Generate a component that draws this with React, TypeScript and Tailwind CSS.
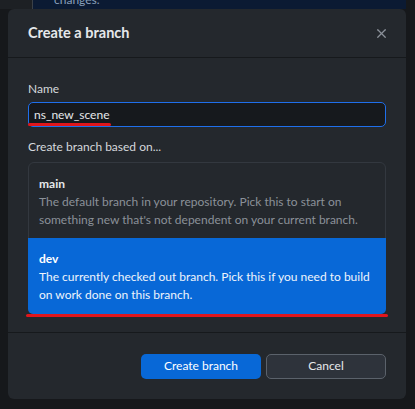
import { X } from 'lucide-react'

const font = { fontFamily: 'Lato, "Noto Sans", sans-serif' }

function BranchOption({
	name,
	description,
	selected,
}: {
	name: string
	description: string
	selected?: boolean
}) {
	return (
		<div
			className={
				selected
					? 'relative bg-[#0868d7] px-[11px] pt-[12px] pb-[10px] -mx-px -mb-px rounded-b-[5px]'
					: 'px-[10px] pt-[12px] pb-[9px]'
			}
		>
			<div className={selected ? 'text-[12px] font-bold leading-[18px] text-white' : 'text-[12px] font-bold leading-[18px] text-[#e6e8eb]'}>
				{name}
			</div>
			<div className={selected ? 'text-[12px] leading-[18px] text-[#eef4fc]' : 'text-[12px] leading-[18px] text-[#8b9199]'}>
				{description}
			</div>
			{selected && (
				<div className="absolute left-[-2px] right-[-2px] bottom-[-3px] h-[3px] rounded-full bg-[#e0161c]" />
			)}
		</div>
	)
}

export default function App() {
	return (
		<div className="w-[415px] h-[409px] bg-[#16181b] overflow-hidden" style={font}>
			<div className="flex h-[9px] overflow-hidden">
				<div className="w-[32px] bg-[#1d2024]" />
				<div className="w-px bg-[#3a4048]" />
				<div className="flex-1 bg-[#0b1a33] overflow-hidden">
					<div className="ml-[21px] -mt-[8px] text-[12px] leading-[16px] text-[#8aa0bb]">changes.</div>
				</div>
				<div className="w-[9px] bg-[#16181b]" />
			</div>
			<div className="ml-[8px] w-[398px] h-[390px] bg-[#24282d] rounded-[6px] flex flex-col">
				<div className="h-[49px] shrink-0 flex items-center justify-between pl-[20px] pr-[17px] border-b border-[#16191c]">
					<span className="text-[14.5px] font-bold text-[#e6e8eb]">Create a branch</span>
					<X className="w-[15px] h-[15px] text-[#8b9199]" strokeWidth={2} />
				</div>
				<div className="flex-1 px-[20px] pt-[23px] border-b border-[#16191c]">
					<div className="text-[12px] leading-[16px] text-[#d5d8dc]">Name</div>
					<div className="relative mt-[5px] h-[25px] rounded-[5px] border border-[#1f6feb] bg-[#16191d] flex items-center px-[5px]">
						<span className="text-[12px] text-[#e6e8eb]">ns_new_scene</span>
						<div className="absolute left-[-1px] top-[20px] w-[83px] h-[3px] rounded-full bg-[#e0161c]" />
					</div>
					<div className="mt-[12px] text-[12px] leading-[16px] text-[#d5d8dc]">Create branch based on...</div>
					<div className="mt-[7px] border border-[#33383f] rounded-[6px]">
						<BranchOption
							name="main"
							description="The default branch in your repository. Pick this to start on something new that's not dependent on your current branch."
						/>
						<BranchOption
							name="dev"
							description="The currently checked out branch. Pick this if you need to build on work done on this branch."
							selected
						/>
					</div>
				</div>
				<div className="h-[66px] shrink-0 flex items-center justify-end gap-[5px] px-[20px]">
					<button className="w-[120px] h-[25px] rounded-[5px] bg-[#0868d7] text-[12px] text-white">Create branch</button>
					<button className="w-[120px] h-[25px] rounded-[5px] bg-[#2e333b] border border-[#5b626b] text-[12px] text-[#e6e8eb]">Cancel</button>
				</div>
			</div>
		</div>
	)
}
